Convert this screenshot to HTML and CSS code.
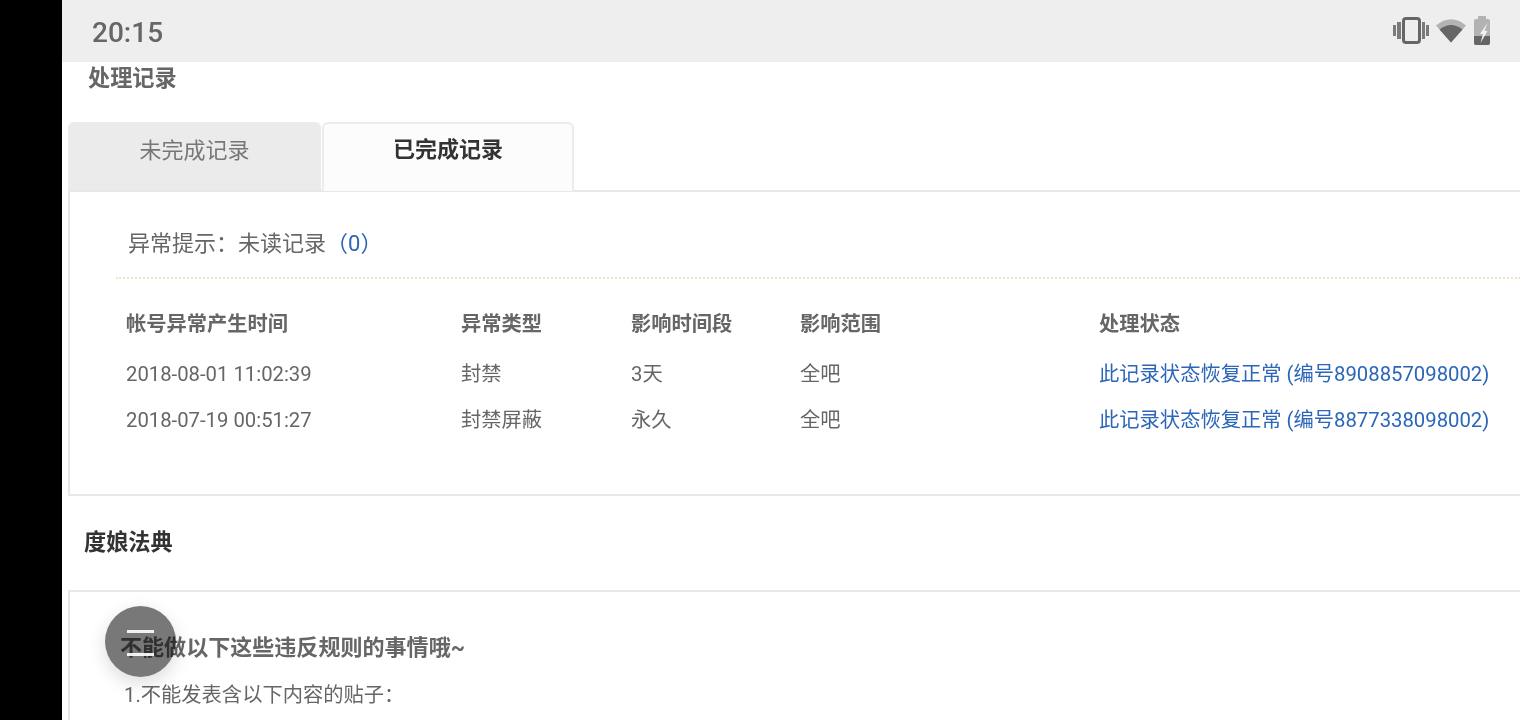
FILE: index.html
```html
<!DOCTYPE html>
<html lang="zh">
<head>
<meta charset="utf-8">
<title>处理记录</title>
<link rel="stylesheet" href="styles.css">
</head>
<body>
<div class="screen">
  <header class="status">
    <span class="time">20:15</span>
    <div class="status-icons">
      <svg class="ic-vib" width="36" height="28" viewBox="0 0 36 28">
        <rect x="0" y="8" width="3" height="11" fill="#7a7a7a"/>
        <rect x="4" y="5" width="4" height="17" fill="#7a7a7a"/>
        <rect x="10.500" y="1.500" width="16" height="24" rx="2.500" fill="none" stroke="#666" stroke-width="3"/>
        <rect x="29" y="5" width="3" height="17" fill="#7a7a7a"/>
        <rect x="33" y="8" width="3" height="11" fill="#7a7a7a"/>
      </svg>
      <svg width="30" height="26" viewBox="0 0 30 26">
        <path d="M0 7.500 Q15 -5 30 7.500 L15 24.500 Z" fill="#b3b3b3"/>
        <path d="M3.500 11.500 Q15 2.500 26.500 11.500 L15 24.500 Z" fill="#666"/>
      </svg>
      <svg width="16" height="30" viewBox="0 0 16 30">
        <path d="M4 0h8v3h2a2 2 0 0 1 2 2v22a2 2 0 0 1-2 2H2a2 2 0 0 1-2-2V5a2 2 0 0 1 2-2h2z" fill="#b3b3b3"/>
        <path d="M0 20h16v7a2 2 0 0 1-2 2H2a2 2 0 0 1-2-2z" fill="#666"/>
        <path d="M13.500 7 L6 18 H9 L6.500 27 L13.500 15 H10.500 L13.500 7 Z" fill="#f2f2f2"/>
      </svg>
    </div>
  </header>

  <main class="page">
    <h2 class="sec-title">处理记录</h2>
    <div class="tabs">
      <div class="tab">未完成记录</div>
      <div class="tab tab-on">已完成记录</div>
    </div>
    <section class="panel panel-records">
      <p class="notice">异常提示：未读记录<a class="link">（0）</a></p>
      <div class="records">
        <div class="grid grid-head">
          <span>帐号异常产生时间</span><span>异常类型</span><span>影响时间段</span><span>影响范围</span><span>处理状态</span>
        </div>
        <div class="grid grid-row">
          <span>2018-08-01 11:02:39</span><span>封禁</span><span>3天</span><span>全吧</span><a class="link">此记录状态恢复正常 (编号8908857098002)</a>
        </div>
        <div class="grid grid-row">
          <span>2018-07-19 00:51:27</span><span>封禁屏蔽</span><span>永久</span><span>全吧</span><a class="link">此记录状态恢复正常 (编号8877338098002)</a>
        </div>
      </div>
    </section>
    <h2 class="law-title">度娘法典</h2>
    <section class="panel panel-law">
      <h3 class="law-head">不能做以下这些违反规则的事情哦~</h3>
      <p class="law-line">1.不能发表含以下内容的贴子：</p>
    </section>
  </main>

  <button class="fab" aria-label="菜单"><i></i><i></i></button>
</div>
</body>
</html>
```
FILE: styles.css
```css
* { box-sizing: border-box; }
html, body { margin: 0; height: 100%; overflow: hidden; background: #000; }
body { font-family: Roboto, "Noto Sans CJK SC", sans-serif; color: #666; }
.screen { position: relative; margin-left: 62px; width: 1458px; height: 720px; background: #fff; overflow: hidden; }

.status { height: 62px; background: #eee; display: flex; align-items: center; justify-content: space-between; padding: 2px 30px 0 30px; filter: blur(.3px); }
.time { font-size: 28px; font-weight: 500; color: #666; }
.status-icons { display: flex; align-items: center; gap: 8px; margin-top: -2px; }
.ic-vib { margin-right: -1px; }

.page { padding-left: 6px; filter: blur(.3px); }
.sec-title { margin: 0 0 0 20px; height: 60px; padding-top: 1px; font-size: 22.2px; line-height: 30px; font-weight: 700; color: #666; }

.tabs { display: flex; height: 68px; gap: 1px; position: relative; z-index: 1; }
.tab { width: 253px; height: 68px; background: #ebebeb; border-radius: 6px 6px 0 0; text-align: center; font-size: 22px; line-height: 57px; color: #777; }
.tab-on { background: #fcfcfc; width: 252px; height: 69px; border: 2px solid #ececf0; border-bottom: 0; color: #333; font-weight: 700; line-height: 51px; }

.panel { border: 2px solid #e8e8ec; border-right: 0; background: #fff; }
.panel-records { height: 306px; padding: 0 0 0 46px; }
.notice { margin: 0; height: 87px; padding: 36px 0 0 12px; font-size: 22px; line-height: 32px; border-bottom: 2px dotted #efe6c8; color: #666; }
.link { color: #2b66b9; }

.records { padding-top: 27px; }
.grid { display: grid; grid-template-columns: 335px 170px 169px 299px 1fr; padding-left: 10px; font-size: 20.25px; }
.grid-head { height: 45px; line-height: 36px; font-weight: 700; color: #666; }
.grid-row { height: 46px; line-height: 46px; color: #666; font-size: 20.3px; }

.law-title { margin: 0 0 0 16px; height: 94px; padding-top: 31px; font-size: 22.2px; line-height: 30px; font-weight: 700; color: #333; }
.panel-law { height: 200px; border-bottom: 0; padding: 38px 0 0 50px; }
.law-head { margin: 0; font-size: 22.05px; line-height: 36px; font-weight: 700; color: #666; }
.law-line { margin: 11px 0 0 4px; font-size: 20.3px; line-height: 36px; color: #666; }

.fab { position: absolute; z-index: 1; left: 43px; top: 606px; width: 71px; height: 71px; padding: 2px 0 0; border: 0; border-radius: 50%; background: rgba(0,0,0,.53); box-shadow: 0 6px 18px rgba(0,0,0,.14); display: flex; flex-direction: column; align-items: center; justify-content: center; gap: 20px; }
.fab i { display: block; width: 27px; height: 3px; background: rgba(255,255,255,.9); }
```
